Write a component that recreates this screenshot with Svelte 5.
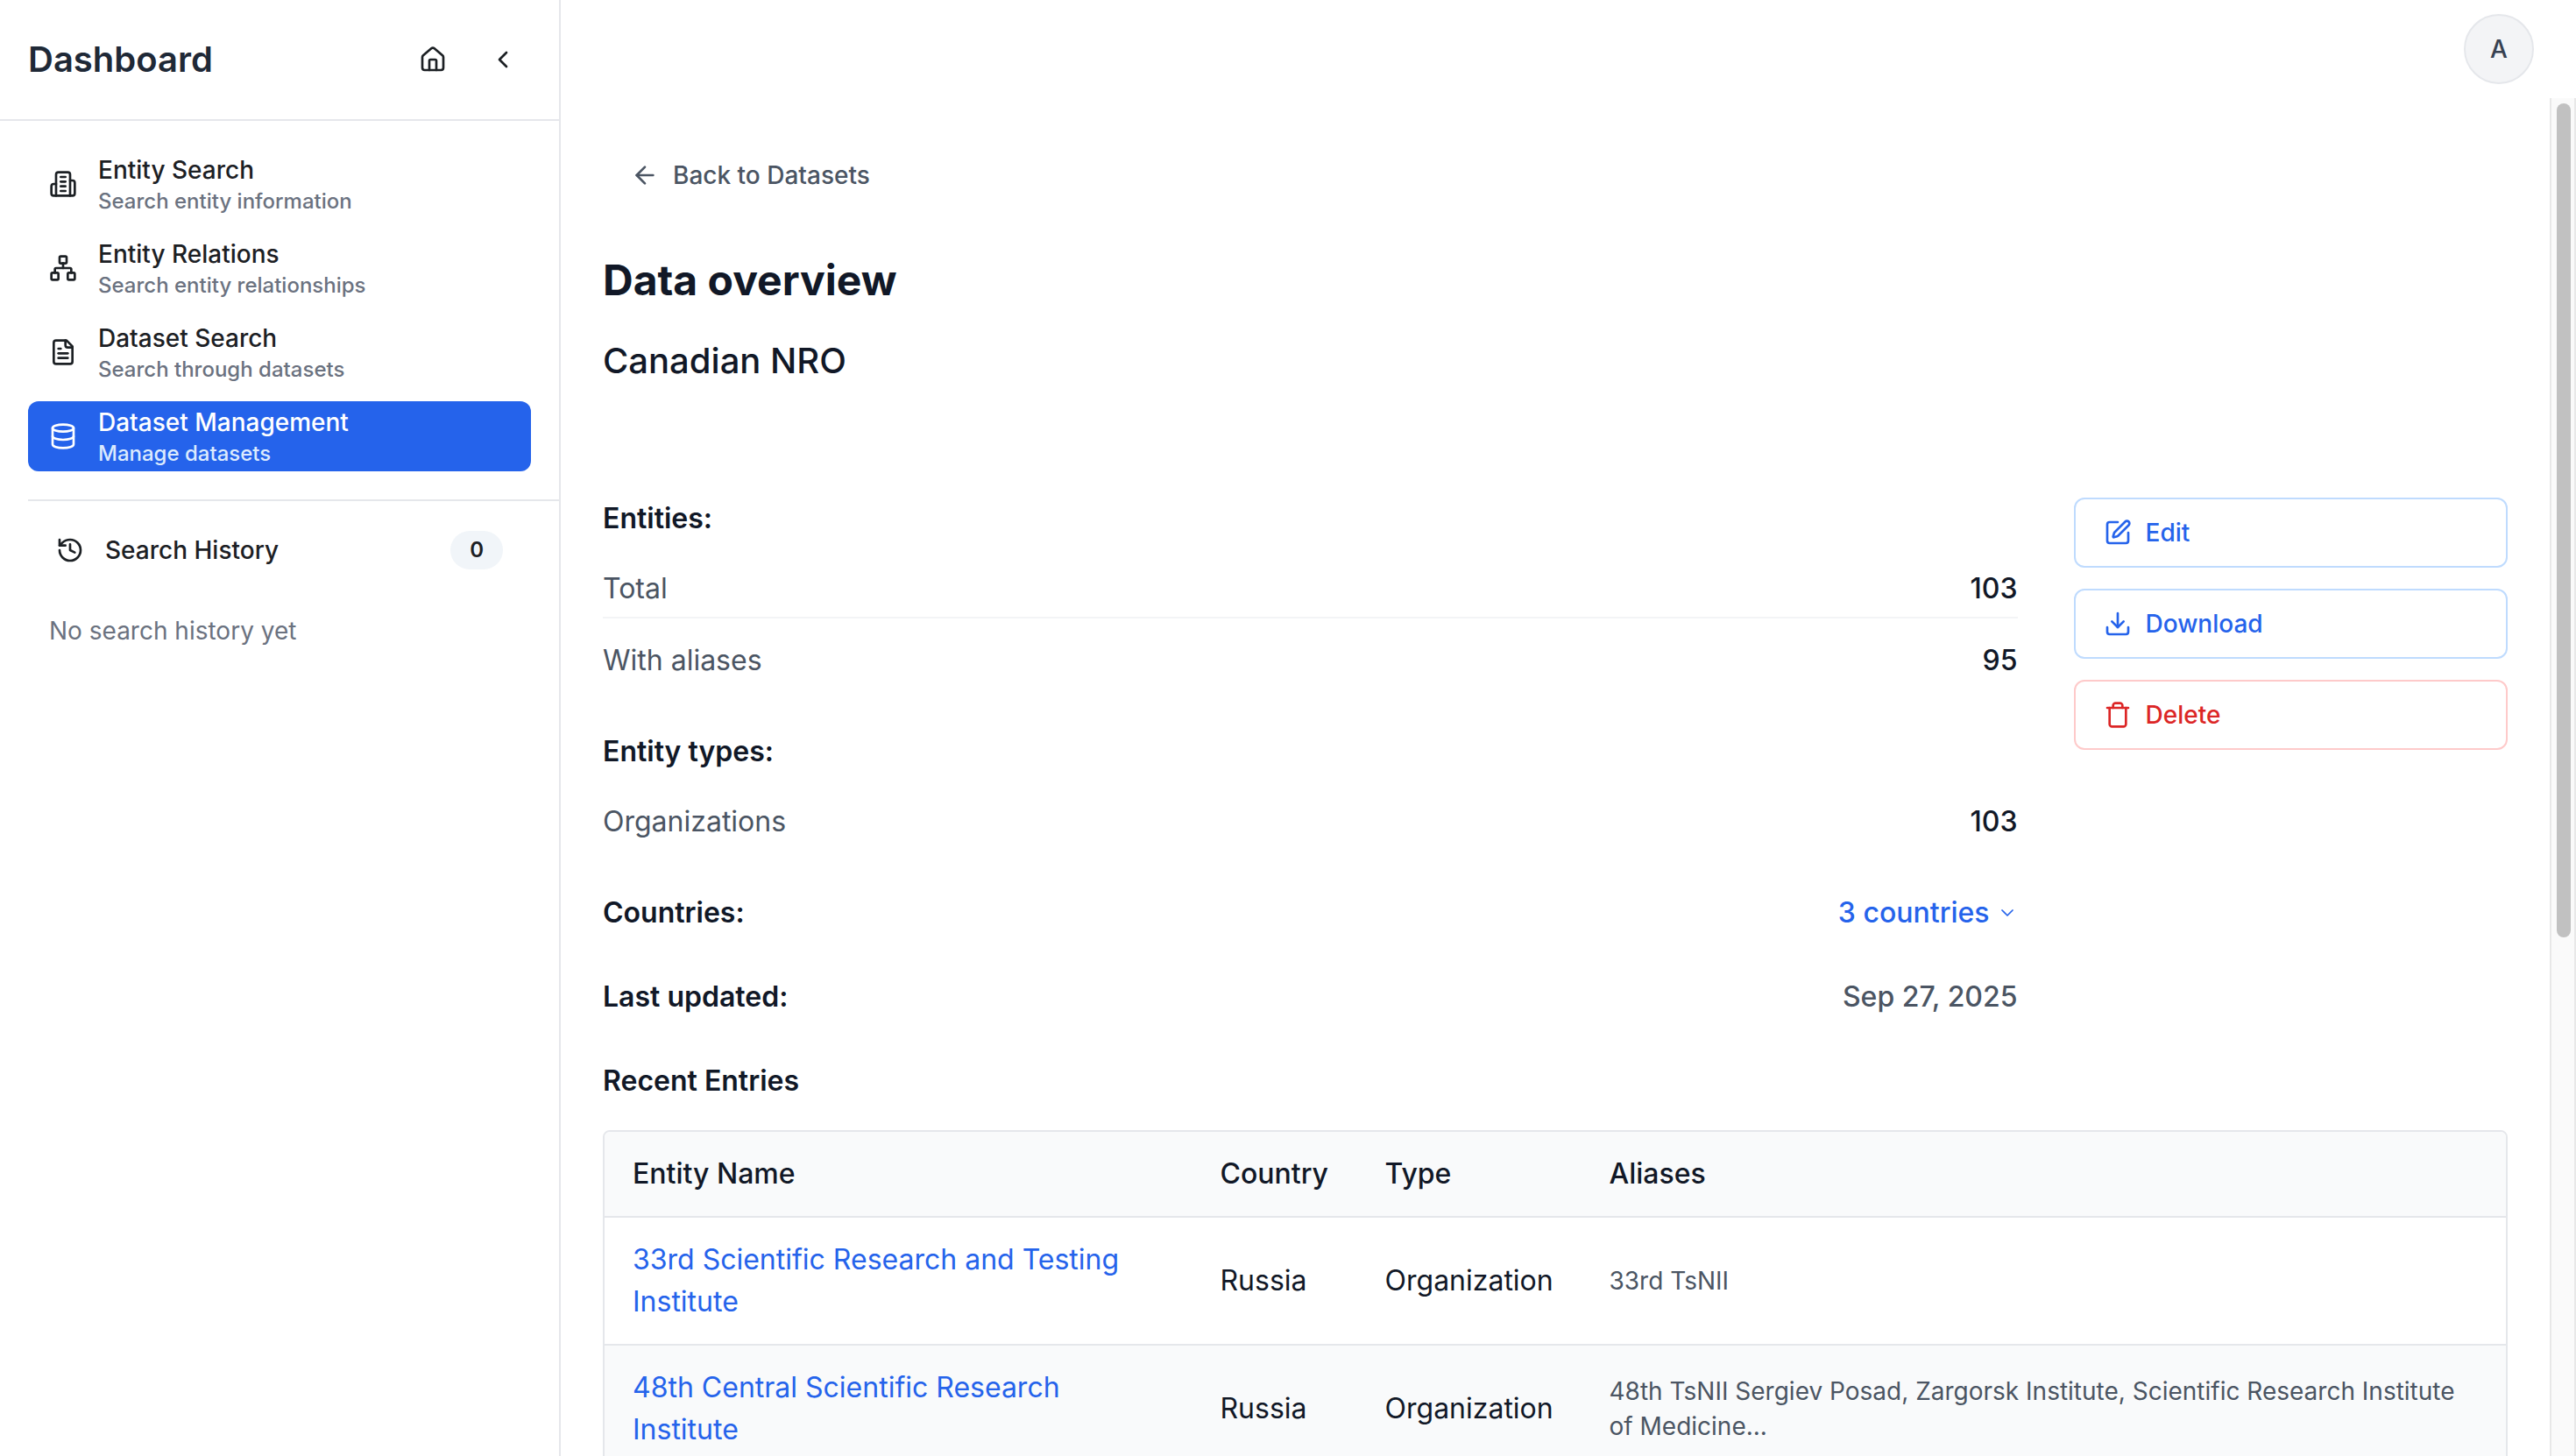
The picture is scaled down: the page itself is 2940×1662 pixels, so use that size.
<script>
  const icons = {
    home: ['M15 21v-8a1 1 0 0 0-1-1h-4a1 1 0 0 0-1 1v8', 'M3 10a2 2 0 0 1 .709-1.528l7-6a2 2 0 0 1 2.582 0l7 6A2 2 0 0 1 21 10v9a2 2 0 0 1-2 2H5a2 2 0 0 1-2-2z'],
    chevronLeft: ['m15 18-6-6 6-6'],
    chevronDown: ['m6 9 6 6 6-6'],
    building: ['M6 22V4a2 2 0 0 1 2-2h8a2 2 0 0 1 2 2v18Z', 'M6 12H4a2 2 0 0 0-2 2v6a2 2 0 0 0 2 2h2', 'M18 9h2a2 2 0 0 1 2 2v9a2 2 0 0 1-2 2h-2', 'M10 6h4', 'M10 10h4', 'M10 14h4', 'M10 18h4'],
    network: ['M17 16h4a1 1 0 0 1 1 1v4a1 1 0 0 1-1 1h-4a1 1 0 0 1-1-1v-4a1 1 0 0 1 1-1z', 'M3 16h4a1 1 0 0 1 1 1v4a1 1 0 0 1-1 1H3a1 1 0 0 1-1-1v-4a1 1 0 0 1 1-1z', 'M10 2h4a1 1 0 0 1 1 1v4a1 1 0 0 1-1 1h-4a1 1 0 0 1-1-1V3a1 1 0 0 1 1-1z', 'M5 16v-3a1 1 0 0 1 1-1h12a1 1 0 0 1 1 1v3', 'M12 12V8'],
    file: ['M15 2H6a2 2 0 0 0-2 2v16a2 2 0 0 0 2 2h12a2 2 0 0 0 2-2V7Z', 'M14 2v4a2 2 0 0 0 2 2h4', 'M10 9H8', 'M16 13H8', 'M16 17H8'],
    database: ['M3 5a9 3 0 1 0 18 0a9 3 0 1 0 -18 0', 'M3 5V19A9 3 0 0 0 21 19V5', 'M3 12A9 3 0 0 0 21 12'],
    history: ['M3 12a9 9 0 1 0 9-9 9.75 9.75 0 0 0-6.74 2.74L3 8', 'M3 3v5h5', 'M12 7v5l4 2'],
    arrowLeft: ['m12 19-7-7 7-7', 'M19 12H5'],
    edit: ['M12 3H5a2 2 0 0 0-2 2v14a2 2 0 0 0 2 2h14a2 2 0 0 0 2-2v-7', 'M18.375 2.625a1 1 0 0 1 3 3l-9.013 9.014a2 2 0 0 1-.853.505l-2.873.84a.5.5 0 0 1-.62-.62l.84-2.873a2 2 0 0 1 .506-.852z'],
    download: ['M21 15v4a2 2 0 0 1-2 2H5a2 2 0 0 1-2-2v-4', 'm7 10 5 5 5-5', 'M12 15V3'],
    trash: ['M3 6h18', 'M19 6v14c0 1-1 2-2 2H7c-1 0-2-1-2-2V6', 'M8 6V4c0-1 1-2 2-2h4c1 0 2 1 2 2v2']
  };

  const nav = [
    { icon: 'building', title: 'Entity Search', text: 'Search entity information' },
    { icon: 'network', title: 'Entity Relations', text: 'Search entity relationships' },
    { icon: 'file', title: 'Dataset Search', text: 'Search through datasets' },
    { icon: 'database', title: 'Dataset Management', text: 'Manage datasets', active: true }
  ];

  const actions = [
    { icon: 'edit', label: 'Edit' },
    { icon: 'download', label: 'Download' },
    { icon: 'trash', label: 'Delete', danger: true }
  ];

  const entries = [
    { name: '33rd Scientific Research and Testing Institute', country: 'Russia', type: 'Organization', aliases: '33rd TsNII' },
    { name: '48th Central Scientific Research Institute', country: 'Russia', type: 'Organization', aliases: '48th TsNII Sergiev Posad, Zargorsk Institute, Scientific Research Institute of Medicine...' }
  ];
</script>

{#snippet icon(name, size = 'md')}
  <svg class="icon {size}" viewBox="0 0 24 24" aria-hidden="true">
    {#each icons[name] as d}<path {d} />{/each}
  </svg>
{/snippet}

<div class="app">
  <aside>
    <header class="side-head">
      <span class="brand">Dashboard</span>
      <button class="icon-btn" aria-label="Home">{@render icon('home')}</button>
      <button class="icon-btn" aria-label="Collapse sidebar">{@render icon('chevronLeft')}</button>
    </header>
    <nav>
      {#each nav as item}
        <a class="nav-item" class:active={item.active} href="#{item.icon}">
          {@render icon(item.icon)}
          <span class="nav-text">
            <span class="nav-title">{item.title}</span>
            <span class="nav-sub">{item.text}</span>
          </span>
        </a>
      {/each}
    </nav>
    <section class="history">
      <button class="history-head">
        {@render icon('history')}
        <span class="history-title">Search History</span>
        <span class="badge">0</span>
      </button>
      <p class="empty">No search history yet</p>
    </section>
  </aside>

  <div class="content">
    <header class="topbar">
      <button class="avatar" aria-label="Account">A</button>
    </header>
    <div class="viewport">
      <main>
        <a class="back" href="#datasets">{@render icon('arrowLeft')}Back to Datasets</a>
        <h1>Data overview</h1>
        <p class="name">Canadian NRO</p>

        <div class="overview">
          <div class="stats">
            <section>
              <h2>Entities:</h2>
              <div class="rows">
                <div class="row"><span>Total</span><strong>103</strong></div>
                <div class="row"><span>With aliases</span><strong>95</strong></div>
              </div>
            </section>
            <section>
              <h2>Entity types:</h2>
              <div class="rows">
                <div class="row"><span>Organizations</span><strong>103</strong></div>
              </div>
            </section>
            <section class="line">
              <h2>Countries:</h2>
              <button class="countries">3 countries {@render icon('chevronDown', 'sm')}</button>
            </section>
            <section class="line">
              <h2>Last updated:</h2>
              <span class="date">Sep 27, 2025</span>
            </section>
          </div>
          <div class="actions">
            {#each actions as action}
              <button class="action" class:danger={action.danger}>{@render icon(action.icon)}{action.label}</button>
            {/each}
          </div>
        </div>

        <h2 class="recent">Recent Entries</h2>
        <div class="table-wrap">
          <table>
            <thead>
              <tr>
                <th class="col-name">Entity Name</th>
                <th class="col-country">Country</th>
                <th class="col-type">Type</th>
                <th>Aliases</th>
              </tr>
            </thead>
            <tbody>
              {#each entries as entry}
                <tr>
                  <td><a href="#entity">{entry.name}</a></td>
                  <td>{entry.country}</td>
                  <td>{entry.type}</td>
                  <td class="aliases">{entry.aliases}</td>
                </tr>
              {/each}
            </tbody>
          </table>
        </div>
      </main>
      <div class="track"><div class="thumb"></div></div>
    </div>
  </div>
</div>

<style>
  :global(body) {
    background: #fff;
    overflow: hidden;
  }
  .app {
    display: flex;
    height: 100vh;
    overflow: hidden;
    font-family: Inter, 'Liberation Sans', sans-serif;
    font-size: 32px;
    line-height: 48px;
    color: #111827;
  }
  .app * {
    box-sizing: border-box;
  }
  button {
    margin: 0;
    padding: 0;
    border: 0;
    background: none;
    color: inherit;
    font: inherit;
    cursor: pointer;
  }
  a {
    color: inherit;
    text-decoration: none;
  }
  h1, h2, p {
    margin: 0;
  }
  .icon {
    flex: none;
    width: 32px;
    height: 32px;
    fill: none;
    stroke: currentColor;
    stroke-width: 2;
    stroke-linecap: round;
    stroke-linejoin: round;
  }
  .icon.sm {
    width: 24px;
    height: 24px;
    stroke-width: 1.7;
  }

  aside {
    flex: none;
    width: 640px;
    border-right: 2px solid #e5e7eb;
    color: #1c2024;
  }
  .side-head {
    display: flex;
    align-items: center;
    gap: 16px;
    padding: 36px 32px;
    border-bottom: 2px solid #e5e7eb;
  }
  .brand {
    flex: 1;
    font-size: 40px;
    line-height: 56px;
    font-weight: 600;
    color: #1f2937;
  }
  .icon-btn {
    display: grid;
    place-items: center;
    width: 64px;
    height: 64px;
  }
  nav {
    display: flex;
    flex-direction: column;
    gap: 16px;
    padding: 32px;
  }
  .nav-item {
    display: flex;
    align-items: center;
    gap: 24px;
    height: 80px;
    padding: 0 24px;
    border-radius: 12px;
    font-weight: 500;
  }
  .nav-text {
    display: flex;
    flex-direction: column;
  }
  .nav-title {
    font-size: 28px;
    line-height: 40px;
  }
  .nav-sub {
    font-size: 24px;
    line-height: 32px;
    color: #6b7280;
  }
  .active {
    background: #2563eb;
    color: #fff;
  }
  .active .nav-sub {
    color: #dbeafe;
  }
  .history {
    margin-left: 32px;
    padding: 16px 32px 0 0;
    border-top: 2px solid #e5e7eb;
  }
  .history-head {
    display: flex;
    align-items: center;
    gap: 24px;
    width: 100%;
    height: 80px;
    padding: 0 32px;
    font-size: 28px;
    font-weight: 500;
  }
  .history-title {
    flex: 1;
    text-align: left;
  }
  .badge {
    padding: 6px 22px;
    border-radius: 22px;
    background: #f1f5f9;
    font-size: 24px;
    line-height: 32px;
    font-weight: 600;
  }
  .empty {
    padding: 32px 24px;
    font-size: 28px;
    line-height: 40px;
    color: #6b7280;
  }

  .content {
    flex: 1;
    display: flex;
    flex-direction: column;
    min-width: 0;
  }
  .topbar {
    flex: none;
    display: flex;
    justify-content: flex-end;
    padding: 16px 48px;
  }
  .avatar {
    width: 80px;
    height: 80px;
    border: 2px solid #e5e7eb;
    border-radius: 50%;
    background: #f3f4f6;
    font-size: 28px;
    font-weight: 500;
    color: #374151;
  }
  .viewport {
    flex: 1;
    display: flex;
    min-height: 0;
  }
  main {
    flex: 1;
    min-width: 0;
    padding: 48px;
    overflow: hidden;
  }
  .track {
    flex: none;
    width: 30px;
    padding: 6px;
    border: solid #e8e8e8;
    border-width: 0 2px;
    background: #fafafa;
  }
  .thumb {
    width: 16px;
    height: 61.9%;
    border-radius: 8px;
    background: #c1c1c1;
  }
  .back {
    display: inline-flex;
    align-items: center;
    gap: 16px;
    height: 80px;
    padding: 0 32px;
    font-size: 28px;
    font-weight: 500;
    color: #4b5563;
  }
  h1 {
    margin-top: 48px;
    font-size: 48px;
    line-height: 64px;
    font-weight: 700;
  }
  .name {
    margin-top: 32px;
    font-size: 40px;
    line-height: 56px;
    font-weight: 500;
  }
  h2 {
    font-size: 32px;
    line-height: 48px;
    font-weight: 600;
  }
  .overview {
    display: grid;
    grid-template-columns: repeat(4, 1fr);
    gap: 64px;
    margin-top: 128px;
  }
  .stats {
    grid-column: span 3;
    display: flex;
    flex-direction: column;
    gap: 48px;
  }
  .rows {
    display: flex;
    flex-direction: column;
    gap: 16px;
    margin-top: 24px;
  }
  .row,
  .line {
    display: flex;
    justify-content: space-between;
  }
  .row {
    padding: 8px 0;
    color: #4b5563;
  }
  .row:not(:last-child) {
    border-bottom: 2px solid #f3f4f6;
  }
  .row strong {
    font-weight: 500;
    color: #111827;
  }
  .countries {
    display: flex;
    align-items: center;
    gap: 8px;
    font-weight: 500;
    color: #2563eb;
  }
  .date {
    font-weight: 500;
    color: #4b5563;
  }
  .actions {
    display: flex;
    flex-direction: column;
    gap: 24px;
  }
  .action {
    display: flex;
    align-items: center;
    gap: 16px;
    height: 80px;
    padding: 0 32px;
    border: 2px solid #bfdbfe;
    border-radius: 12px;
    font-size: 28px;
    font-weight: 500;
    color: #2563eb;
  }
  .danger {
    border-color: #fecaca;
    color: #dc2626;
  }
  .recent {
    margin-top: 48px;
  }
  .table-wrap {
    margin-top: 32px;
    border: 2px solid #e5e7eb;
    border-radius: 8px;
    overflow: hidden;
  }
  table {
    width: 100%;
    table-layout: fixed;
    border-spacing: 0;
  }
  .col-name {
    width: 30.9%;
  }
  .col-country {
    width: 188px;
  }
  .col-type {
    width: 256px;
  }
  th,
  td {
    padding: 24px 32px;
    border-bottom: 2px solid #e5e7eb;
    text-align: left;
    vertical-align: middle;
    font-weight: 400;
  }
  th {
    font-weight: 500;
  }
  thead tr,
  tbody tr:nth-child(even) {
    background: #f9fafb;
  }
  td a {
    color: #2563eb;
  }
  td.aliases {
    font-size: 28px;
    line-height: 40px;
    color: #4b5563;
  }
</style>
